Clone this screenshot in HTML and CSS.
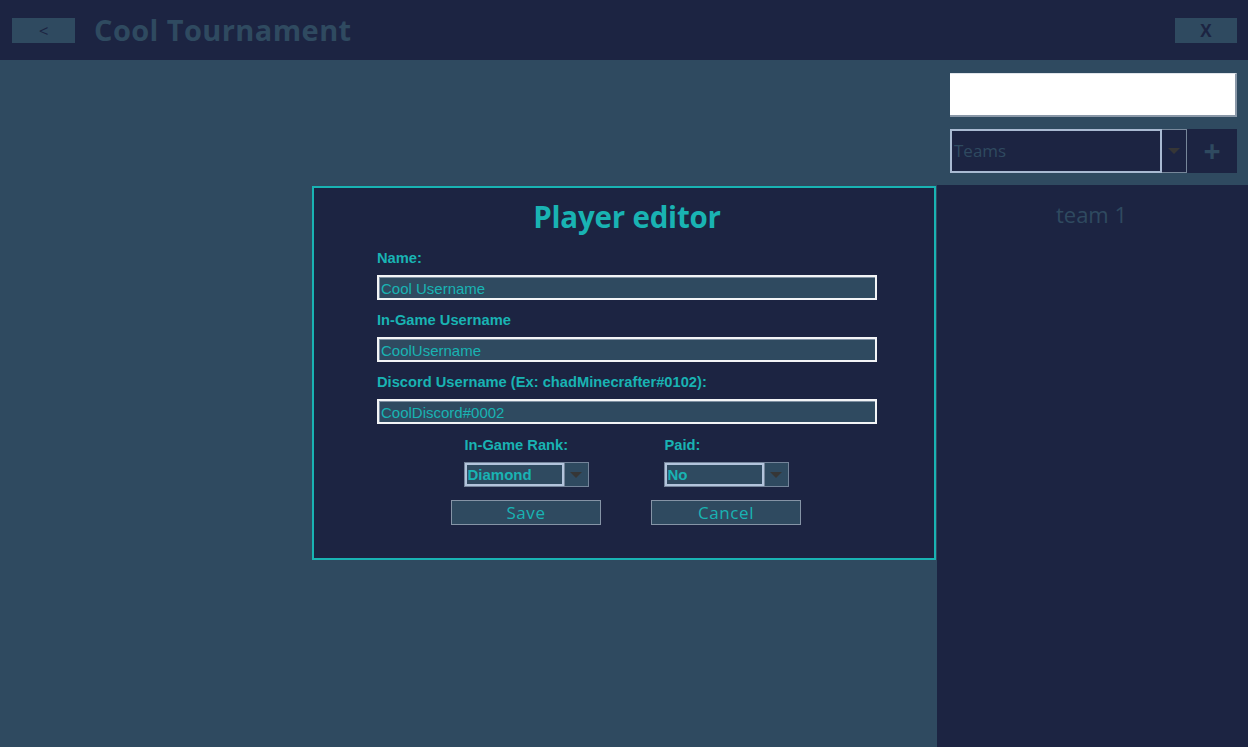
FILE: index.html
```html
<!DOCTYPE html>
<html>
<head>
<meta charset="utf-8">
<link rel="stylesheet" href="styles.css">
</head>
<body>
<div class="app">
  <header class="topbar">
    <button class="hbtn back">&lt;</button>
    <h1 class="title">Cool Tournament</h1>
    <button class="hbtn close">X</button>
  </header>
  <div class="body">
    <main class="content"></main>
    <aside class="sidebar">
      <div class="side-top">
        <div class="search"></div>
        <div class="combo-row">
          <div class="combo">
            <div class="combo-text">Teams</div>
            <div class="combo-arrow"><span class="tri"></span></div>
          </div>
          <button class="plus">+</button>
        </div>
      </div>
      <div class="team-list">
        <div class="team">team 1</div>
      </div>
    </aside>
  </div>
  <div class="overlay">
    <div class="dialog">
      <h2 class="dtitle">Player editor</h2>
      <div class="form">
        <label class="lbl">Name:</label>
        <div class="field">Cool Username</div>
        <label class="lbl">In-Game Username</label>
        <div class="field">CoolUsername</div>
        <label class="lbl">Discord Username (Ex: chadMinecrafter#0102):</label>
        <div class="field">CoolDiscord#0002</div>
      </div>
      <div class="selects">
        <div class="selgroup">
          <label class="lbl">In-Game Rank:</label>
          <div class="select">
            <div class="select-text">Diamond</div>
            <div class="select-arrow"><span class="tri"></span></div>
          </div>
        </div>
        <div class="selgroup">
          <label class="lbl">Paid:</label>
          <div class="select">
            <div class="select-text">No</div>
            <div class="select-arrow"><span class="tri"></span></div>
          </div>
        </div>
      </div>
      <div class="actions">
        <button class="abtn">Save</button>
        <button class="abtn">Cancel</button>
      </div>
    </div>
  </div>
</div>
</body>
</html>
```
FILE: styles.css
```css
* { box-sizing: border-box; }
html, body { margin: 0; padding: 0; }
body {
  width: 1248px;
  height: 747px;
  overflow: hidden;
  background: #2f4a60;
  font-family: "Open Sans", "Noto Sans", sans-serif;
}
.app { display: flex; flex-direction: column; height: 747px; }
.topbar {
  height: 60px;
  background: #1c2442;
  display: flex;
  align-items: center;
  padding: 0 11px 0 12px;
}
.hbtn {
  width: 63px;
  height: 25px;
  background: #2f4a60;
  border: none;
  color: #1c2442;
  font-family: "Open Sans", sans-serif;
  font-size: 17px;
  padding: 0;
  line-height: 25px;
}
.hbtn.close { margin-left: auto; font-weight: 700; width: 62px; }
.title {
  margin: -2px 0 0 19px;
  color: #2f4a60;
  font-family: "Open Sans", sans-serif;
  font-weight: 700;
  font-size: 29px;
  letter-spacing: 0.4px;
  line-height: 1;
}
.body { flex: 1; display: flex; }
.content { flex: 1; background: #2f4a60; }
.sidebar {
  width: 311px;
  display: flex;
  flex-direction: column;
}
.side-top {
  background: #2f4a60;
  padding: 13px 11px 12px 13px;
  display: flex;
  flex-direction: column;
  gap: 12px;
}
.search {
  height: 44px;
  background: #fff;
  border-right: 2px solid #8a98a8;
  border-bottom: 2px solid #8a98a8;
  border-top: 1px solid #dfe4ea;
}
.combo-row { display: flex; height: 44px; }
.combo { display: flex; flex: 1; }
.combo-text {
  flex: 1;
  background: #1c2442;
  border: 2px solid #a9bad2;
  color: #2f4a60;
  font-size: 17px;
  padding: 0 0 0 2px;
  line-height: 40px;
}
.combo-arrow {
  width: 25px;
  border: 1px solid #77879a;
  border-left: none;
  background: #1c2442;
  display: flex;
  align-items: center;
  justify-content: center;
}
.tri {
  width: 0; height: 0;
  border-left: 6px solid transparent;
  border-right: 6px solid transparent;
  border-top: 6px solid #363636;
}
.plus {
  width: 50px;
  background: #1c2442;
  border: none;
  color: #2f4a60;
  font-size: 30px;
  font-weight: 700;
  font-family: "Open Sans", sans-serif;
  padding: 0;
  line-height: 40px;
}
.team-list { flex: 1; background: #1c2442; padding-top: 13px; }
.team {
  text-align: center;
  color: #2f4a60;
  font-size: 22px;
  line-height: 32px;
  padding-right: 2px;
}
.overlay {
  position: fixed;
  inset: 0;
  display: flex;
  align-items: center;
  justify-content: center;
  pointer-events: none;
}
.dialog {
  width: 624px;
  height: 374px;
  margin-top: -1px;
  background: #1c2442;
  border: 2px solid #19b3b3;
  padding: 9px 0 0 0;
  display: flex;
  flex-direction: column;
  align-items: center;
}
.dtitle {
  margin: 0;
  color: #19b3b3;
  font-family: "Open Sans", sans-serif;
  font-weight: 700;
  font-size: 29.5px;
  line-height: 40px;
  letter-spacing: -0.2px;
  padding-left: 6px;
}
.form {
  width: 500px;
  margin: 13px 0 0 6px;
  display: flex;
  flex-direction: column;
}
.lbl {
  color: #19b3b3;
  font-family: "Liberation Sans", Arial, sans-serif;
  font-weight: 700;
  font-size: 14.7px;
  line-height: 16px;
  display: block;
}
.form .lbl { margin-bottom: 9px; }
.field {
  height: 25px;
  background: #2f4a60;
  border: 2px solid #f2f4f6;
  box-shadow: inset 1px 1px 0 #7f90a2;
  color: #19b3b3;
  font-family: "Liberation Sans", Arial, sans-serif;
  font-size: 15px;
  line-height: 22px;
  padding: 1px 0 0 2px;
  margin-bottom: 12px;
}
.selects {
  display: flex;
  gap: 75px;
  margin-top: 1px;
  padding-left: 4px;
}
.selgroup { display: flex; flex-direction: column; gap: 9px; }
.selgroup .lbl { padding-left: 1px; }
.select {
  width: 125px;
  height: 25px;
  display: flex;
  border: 1px solid #74849a;
  background: #2f4a60;
}
.select-text {
  flex: 1;
  border: 2px solid #b3c4dc;
  color: #19b3b3;
  font-family: "Liberation Sans", Arial, sans-serif;
  font-weight: 700;
  font-size: 15px;
  line-height: 19px;
  padding-left: 1px;
}
.select-arrow {
  width: 24px;
  border-left: 1px solid #74849a;
  display: flex;
  align-items: center;
  justify-content: center;
}
.actions {
  display: flex;
  gap: 50px;
  margin-top: 13px;
  padding-left: 4px;
}
.abtn {
  width: 150px;
  height: 25px;
  background: #2f4a60;
  border: 1px solid #8594a6;
  color: #19b3b3;
  font-family: "Open Sans", sans-serif;
  font-size: 17px;
  letter-spacing: 0.6px;
  line-height: 21px;
  padding: 0;
}
```
